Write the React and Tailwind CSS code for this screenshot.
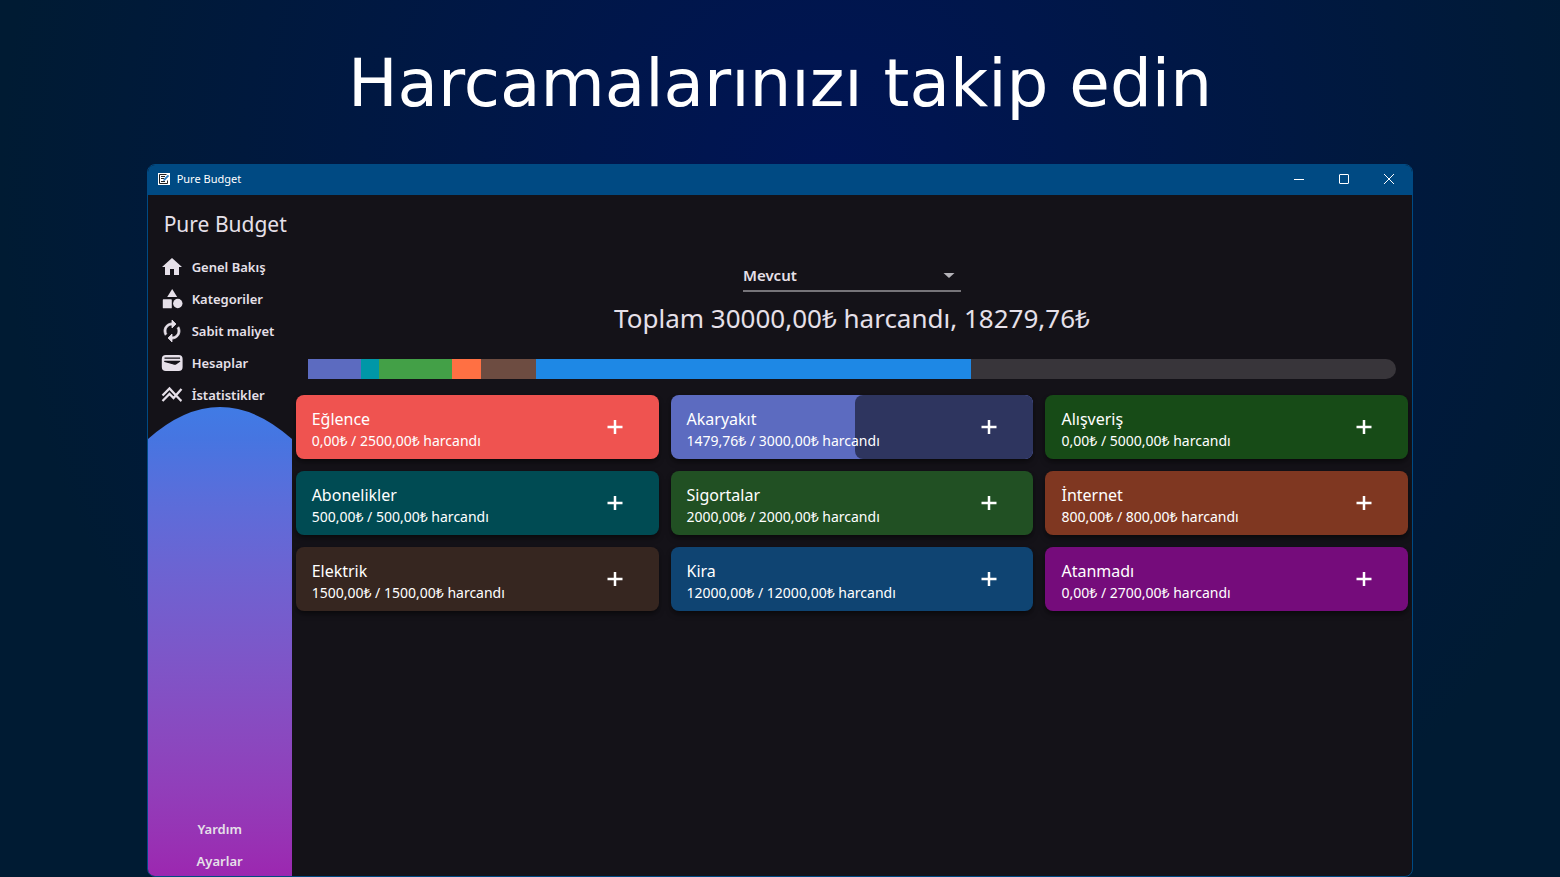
import { useState } from "react";

const navItems = [
  {
    label: "Genel Bakış",
    icon: <path d="M10 20v-6h4v6h5v-8h3L12 3 2 12h3v8z" />,
  },
  {
    label: "Kategoriler",
    icon: (
      <>
        <path d="m12.200 2-5 8h10z" />
        <circle cx="17.800" cy="16.500" r="4.700" />
        <rect x="2.800" y="12.300" width="9" height="9" rx=".6" />
      </>
    ),
  },
  {
    label: "Sabit maliyet",
    icon: (
      <path
        stroke="currentColor"
        strokeWidth=".8"
        d="M12 6v3l4-4-4-4v3c-4.420 0-8 3.580-8 8 0 1.570.46 3.030 1.240 4.260L6.700 14.800c-.45-.83-.7-1.790-.7-2.800 0-3.310 2.690-6 6-6zm6.760 1.740L17.300 9.200c.44.840.7 1.790.7 2.800 0 3.310-2.690 6-6 6v-3l-4 4 4 4v-3c4.420 0 8-3.580 8-8 0-1.570-.46-3.030-1.240-4.260z"
      />
    ),
  },
  {
    label: "Hesaplar",
    icon: (
      <>
        <rect x="1.800" y="4" width="20.800" height="16" rx="4" />
        <path
          d="M4.500 7.200h15.500M4.700 10.300h15l-3.600 2.300c-.7.500-1.500.5-2.300.4z"
          fill="#141218"
          stroke="#141218"
          strokeWidth="1.300"
          strokeLinejoin="round"
        />
      </>
    ),
  },
  {
    label: "İstatistikler",
    icon: (
      <path
        d="m2.500 12.500 7-7 7.500 8c1.600 1.700 3 3.500 4.500 4.500M2.500 18l7-7 4 4 8-9"
        fill="none"
        stroke="currentColor"
        strokeWidth="2.300"
      />
    ),
  },
];

const segments = [
  { color: "#5c6bc0", value: 1479.76 },
  { color: "#0097a7", value: 500 },
  { color: "#43a047", value: 2000 },
  { color: "#ff7043", value: 800 },
  { color: "#6d4c41", value: 1500 },
  { color: "#1e88e5", value: 12000 },
];
const budget = 30000;

const categories = [
  { name: "Eğlence", detail: "0,00₺ / 2500,00₺ harcandı", bg: "bg-[#ef5350]" },
  {
    name: "Akaryakıt",
    detail: "1479,76₺ / 3000,00₺ harcandı",
    bg: "bg-[#5c6bc0]",
    shade: 49.3,
  },
  { name: "Alışveriş", detail: "0,00₺ / 5000,00₺ harcandı", bg: "bg-[#174b17]" },
  { name: "Abonelikler", detail: "500,00₺ / 500,00₺ harcandı", bg: "bg-[#004b53]" },
  { name: "Sigortalar", detail: "2000,00₺ / 2000,00₺ harcandı", bg: "bg-[#215023]" },
  { name: "İnternet", detail: "800,00₺ / 800,00₺ harcandı", bg: "bg-[#7f3721]" },
  { name: "Elektrik", detail: "1500,00₺ / 1500,00₺ harcandı", bg: "bg-[#362620]" },
  { name: "Kira", detail: "12000,00₺ / 12000,00₺ harcandı", bg: "bg-[#0f4472]" },
  { name: "Atanmadı", detail: "0,00₺ / 2700,00₺ harcandı", bg: "bg-[#750c7b]" },
];

function TitleBar() {
  return (
    <header className="flex h-[30px] shrink-0 items-center bg-[#004a83] pb-0.5 pl-2.5 text-white">
      <svg className="size-3" viewBox="0 0 12 12" aria-hidden="true">
        <path d="M0 0h12v12H0z" fill="#fff" />
        <path d="M8.500 1.500h-7v9h8V7.500" fill="none" stroke="#222" />
        <path d="M3 3.500h4M3 5.500h3M3 8.500h4" stroke="#222" />
        <path d="m5.200 8 .5-2L9.800 1.700l1.400 1.400L7 7.500z" fill="#2b7cc0" />
      </svg>
      <span className="ml-[7px] pt-px text-[11px]">Pure Budget</span>
      <div className="ml-auto flex h-full">
        <button type="button" aria-label="Simge durumuna küçült" className="flex w-[45px] items-center justify-center">
          <svg className="size-3" viewBox="0 0 12 12" stroke="currentColor">
            <path d="M1 6.500h10" />
          </svg>
        </button>
        <button type="button" aria-label="Ekranı kapla" className="flex w-[45px] items-center justify-center">
          <svg className="size-3" viewBox="0 0 12 12" fill="none" stroke="currentColor">
            <rect x="1.500" y="1.500" width="9" height="9" rx=".5" />
          </svg>
        </button>
        <button type="button" aria-label="Kapat" className="flex w-[46px] items-center justify-center">
          <svg className="size-3" viewBox="0 0 12 12" stroke="currentColor">
            <path d="m1 1 10 10M11 1 1 11" />
          </svg>
        </button>
      </div>
    </header>
  );
}

function Sidebar() {
  return (
    <aside className="flex w-36 shrink-0 flex-col">
      <h2 className="mt-[11px] pl-4 text-[21px] leading-9">Pure Budget</h2>
      <nav className="mt-[9px] flex flex-col">
        {navItems.map((item) => (
          <a
            key={item.label}
            href="#"
            className="flex h-8 items-center gap-2 pl-3 text-[13px] font-semibold whitespace-nowrap"
          >
            <svg className="size-6 shrink-0" viewBox="0 0 24 24" fill="currentColor" aria-hidden="true">
              {item.icon}
            </svg>
            <span className="pt-0.5">{item.label}</span>
          </a>
        ))}
      </nav>
      <svg className="-mt-1 block h-8 w-full" viewBox="0 0 144 32" preserveAspectRatio="none" aria-hidden="true">
        <defs>
          <linearGradient id="cap" x1="0" y1="0" x2="0" y2="1">
            <stop offset="0" stopColor="#407be5" />
            <stop offset="1" stopColor="#4675e1" />
          </linearGradient>
        </defs>
        <path d="M0 32Q72-32 144 32z" fill="url(#cap)" />
      </svg>
      <div className="flex grow flex-col items-center justify-end bg-linear-to-b from-[#4675e1] to-[#9c27b0] text-[13px] font-semibold">
        <a href="#" className="h-8 pt-px leading-8">Yardım</a>
        <a href="#" className="h-8 pt-px leading-8">Ayarlar</a>
      </div>
    </aside>
  );
}

function CategoryCard({ name, detail, bg, shade }) {
  return (
    <article
      className={`relative flex h-16 items-center overflow-hidden rounded-lg pr-8 pl-4 text-white shadow-md shadow-black/40 ${bg}`}
    >
      {shade && (
        <div
          className="absolute inset-y-0 right-0 rounded-lg bg-[#2e355f]"
          style={{ width: `${shade}%` }}
        />
      )}
      <div className="relative grow pt-1">
        <h3 className="text-base leading-6">{name}</h3>
        <p className="text-sm leading-5">{detail}</p>
      </div>
      <button type="button" aria-label={`${name} ekle`} className="relative">
        <svg className="size-6" viewBox="0 0 24 24" stroke="currentColor" strokeWidth="2.500">
          <path d="M4.500 12h15M12 5v14" />
        </svg>
      </button>
    </article>
  );
}

export default function App() {
  const [period, setPeriod] = useState("Mevcut");
  return (
    <div className="flex min-h-screen flex-col bg-[radial-gradient(circle_farthest-side_at_53%_20%,#001455_0%,#001b33_100%)] font-['Noto_Sans','Open_Sans',sans-serif] text-[#e6e0e9]">
      <h1 className="pt-11 text-center font-['DejaVu_Sans',sans-serif] text-[66px] leading-20 text-white">
        Harcamalarınızı takip edin
      </h1>
      <div className="mx-auto mt-10 flex w-[81.2%] grow flex-col overflow-hidden rounded-lg border border-[#004a83] bg-[#141218]">
        <TitleBar />
        <div className="flex grow">
          <Sidebar />
          <main className="min-w-0 grow px-1 pt-[66px]">
            <div className="mx-auto flex w-[218px]">
              <div className="relative w-full border-b-2 border-[#767479]">
                <select
                  aria-label="Dönem"
                  value={period}
                  onChange={(e) => setPeriod(e.target.value)}
                  className="block h-[29px] w-full appearance-none bg-transparent text-[15px] font-semibold"
                >
                  <option>Mevcut</option>
                </select>
                <svg
                  className="pointer-events-none absolute top-0.5 right-0 size-6 text-[#b5b3b8]"
                  viewBox="0 0 24 24"
                  fill="currentColor"
                >
                  <path d="m6.500 10 5.500 5 5.500-5z" />
                </svg>
              </div>
            </div>
            <p className="mt-0.5 text-center text-[26px] leading-12">
              Toplam 30000,00₺ harcandı, 18279,76₺
            </p>
            <div className="mx-3 mt-[17px] flex h-5 overflow-hidden rounded-r-full bg-[#38353a]">
              {segments.map((s) => (
                <div
                  key={s.color}
                  style={{ width: `${(s.value / budget) * 100}%`, backgroundColor: s.color }}
                />
              ))}
            </div>
            <div className="mt-4 grid grid-cols-3 gap-3">
              {categories.map((c) => (
                <CategoryCard key={c.name} {...c} />
              ))}
            </div>
          </main>
        </div>
      </div>
    </div>
  );
}
